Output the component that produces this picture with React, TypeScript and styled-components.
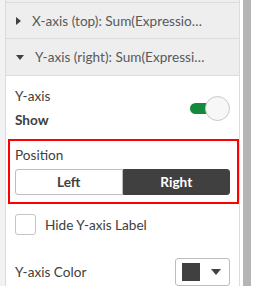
import styled, { createGlobalStyle } from "styled-components";

const Global = createGlobalStyle`
    html, body {
        margin: 0;
        padding: 0;
        background: #ffffff;
    }
    body {
        font-family: Lato, "Open Sans", sans-serif;
        color: #404040;
        font-size: 13.6px;
    }
`;

const Page = styled.div`
    display: flex;
    width: 254px;
    height: 286px;
    overflow: hidden;
    background: #f2f2f2;
`;

const Panel = styled.div`
    margin-left: 5px;
    width: 233px;
    border-left: 1px solid #dcdcdc;
    border-right: 1px solid #dcdcdc;
    background: #ffffff;
    display: flex;
    flex-direction: column;
`;

const Gutter = styled.div`
    width: 14px;
    background: #ffffff;
    padding: 0 3px;
    box-sizing: border-box;
`;

const Thumb = styled.div`
    width: 8px;
    height: 100%;
    background: #b5b5b5;
`;

const Stub = styled.div`
    height: 2px;
    background: #eeeeee;
    border-bottom: 1px solid #dcdcdc;
`;

const Header = styled.div`
    display: flex;
    align-items: center;
    height: 36px;
    padding-left: 10px;
    background: #eeeeee;
    border-bottom: 1px solid #dcdcdc;
    color: #595959;
    white-space: nowrap;
`;

const Caret = styled.span<{ $open?: boolean }>`
    width: 0;
    height: 0;
    margin-right: 11px;
    ${({ $open }) => $open
        ? `border-left: 4px solid transparent; border-right: 4px solid transparent; border-top: 5px solid #404040;`
        : `border-top: 4px solid transparent; border-bottom: 4px solid transparent; border-left: 5px solid #404040;`}
`;

const Body = styled.div`
    display: flex;
    flex-direction: column;
    padding-top: 12px;
`;

const Row = styled.div`
    display: flex;
    align-items: center;
    justify-content: space-between;
    padding: 0 9px;
`;

const Label = styled.div`
    line-height: 16px;
`;

const Strong = styled.div`
    line-height: 16px;
    font-weight: bold;
    margin-top: 8px;
`;

const Switch = styled.div`
    position: relative;
    width: 40px;
    height: 25px;
`;

const Track = styled.div`
    position: absolute;
    left: 0;
    top: 7px;
    width: 24px;
    height: 11px;
    border-radius: 6px;
    background: #168a3c;
`;

const Knob = styled.div`
    position: absolute;
    right: 0;
    top: 0;
    width: 25px;
    height: 25px;
    border-radius: 50%;
    background: #f7f7f7;
    border: 1px solid #c8c8c8;
    box-sizing: border-box;
`;

const Highlight = styled.div`
    margin: 11px 0 0 2px;
    border: 2px solid #ff0000;
    padding: 6px 7px 7px 5px;
`;

const Group = styled.div`
    display: flex;
    margin-top: 6px;
    height: 26px;
`;

const Seg = styled.div<{ $active?: boolean }>`
    flex: 1;
    display: flex;
    align-items: center;
    justify-content: center;
    font-weight: bold;
    box-sizing: border-box;
    background: ${({ $active }) => $active ? "#404040" : "#ffffff"};
    color: ${({ $active }) => $active ? "#ffffff" : "#404040"};
    border: 1px solid ${({ $active }) => $active ? "#404040" : "#bdbdbd"};
    border-radius: ${({ $active }) => $active ? "0 3px 3px 0" : "3px 0 0 3px"};
`;

const Check = styled.label`
    display: flex;
    align-items: center;
    gap: 9px;
    padding: 0 9px;
    margin-top: 10px;
`;

const Box = styled.span`
    width: 21px;
    height: 21px;
    box-sizing: border-box;
    border: 1px solid #c4c4c4;
    border-radius: 3px;
`;

const ColorRow = styled(Row)`
    margin-top: 23px;
`;

const Picker = styled.div`
    display: flex;
    align-items: center;
    gap: 11px;
    width: 55px;
    height: 28px;
    box-sizing: border-box;
    padding-left: 6px;
    border: 1px solid #bdbdbd;
    border-radius: 3px;
`;

const Swatch = styled.span`
    width: 18px;
    height: 18px;
    background: #404040;
`;

const Down = styled.span`
    width: 0;
    height: 0;
    border-left: 5px solid transparent;
    border-right: 5px solid transparent;
    border-top: 6px solid #404040;
`;

function App() {
    return (
        <Page>
            <Global />
            <Panel>
                <Stub />
                <Header><Caret />X-axis (top): Sum(Expressio…</Header>
                <Header><Caret $open />Y-axis (right): Sum(Expressi…</Header>
                <Body>
                    <Row>
                        <div>
                            <Label>Y-axis</Label>
                            <Strong>Show</Strong>
                        </div>
                        <Switch>
                            <Track />
                            <Knob />
                        </Switch>
                    </Row>
                    <Highlight>
                        <Label>Position</Label>
                        <Group>
                            <Seg>Left</Seg>
                            <Seg $active>Right</Seg>
                        </Group>
                    </Highlight>
                    <Check>
                        <Box />
                        Hide Y-axis Label
                    </Check>
                    <ColorRow>
                        <Label>Y-axis Color</Label>
                        <Picker>
                            <Swatch />
                            <Down />
                        </Picker>
                    </ColorRow>
                </Body>
            </Panel>
            <Gutter><Thumb /></Gutter>
        </Page>
    );
}

export default App;
